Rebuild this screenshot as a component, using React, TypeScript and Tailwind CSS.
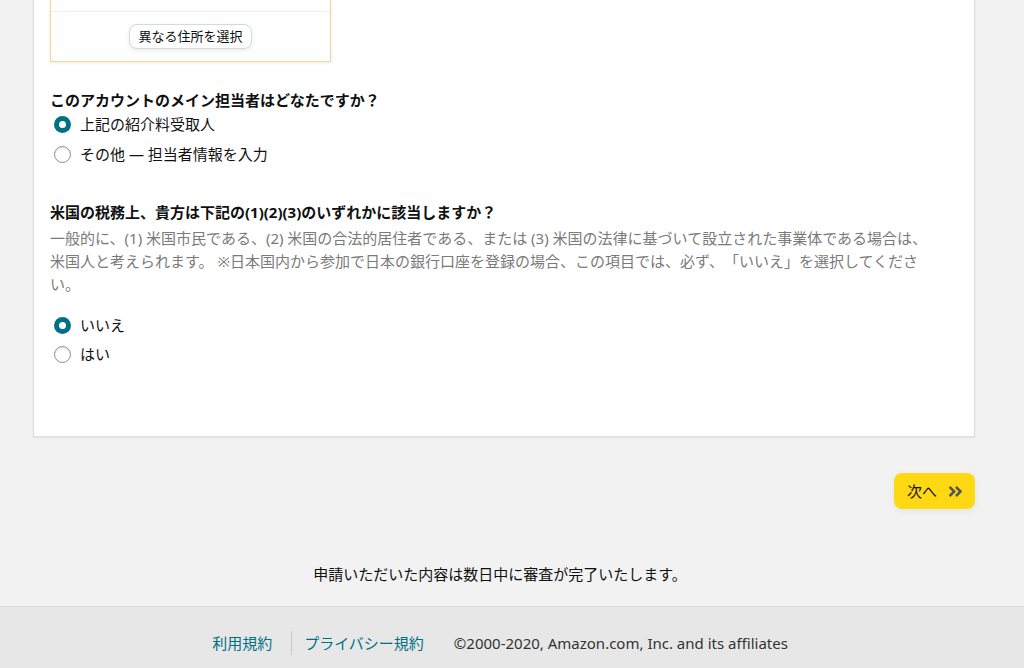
import type React from "react";
import { FaAngleDoubleRight } from "react-icons/fa";

type RadioProps = {
	label: string;
	checked?: boolean;
};

const Radio: React.FC<RadioProps> = ({ label, checked }) => (
	<label className="flex h-[26px] items-center">
		<span
			className={`ml-[4px] box-border flex h-[17px] w-[17px] items-center justify-center rounded-full ${
				checked
					? "bg-[#007185]"
					: "border border-[#8d9096] bg-white shadow-[inset_0_1px_2px_rgba(0,0,0,0.12)]"
			}`}
		>
			{checked && <span className="h-[7px] w-[7px] rounded-full bg-white" />}
		</span>
		<span className="ml-[9px] text-[15px] leading-[22px] text-[#0f1111]">
			{label}
		</span>
	</label>
);

const App: React.FC = () => {
	return (
		<div
			className="min-h-[668px] bg-[#f2f2f2] [text-spacing-trim:space-all]"
			style={{ fontFamily: '"Noto Sans", "Noto Sans CJK JP", sans-serif' }}
		>
			{/* main form card */}
			<div className="ml-[33px] w-[942px] border border-t-0 border-[#dddddd] bg-white px-[16px] pb-[69px] shadow-[0_1px_2px_rgba(0,0,0,0.06)]">
				<div className="w-[281px] border border-t-0 border-[#f8d596] shadow-[0_1px_3px_rgba(0,0,0,0.08)]">
					<div className="h-[12px] border-b border-[#eeeeee]" />
					<div className="flex justify-center pt-[12px] pb-[12px]">
						<button
							type="button"
							className="h-[25px] rounded-[8px] border border-[#d5d9d9] bg-white px-[8px] text-[13px] leading-[23px] text-[#0f1111] shadow-[0_2px_4px_rgba(213,217,217,0.5)]"
						>
							異なる住所を選択
						</button>
					</div>
				</div>

				<h3 className="mt-[27px] text-[15px] font-bold leading-[22px] text-[#0f1111]">
					このアカウントのメイン担当者はどなたですか？
				</h3>
				<div className="flex flex-col gap-[4px]">
					<Radio label="上記の紹介料受取人" checked />
					<Radio label="その他 — 担当者情報を入力" />
				</div>

				<h3 className="mt-[34px] text-[15px] font-bold leading-[22px] text-[#0f1111]">
					米国の税務上、貴方は下記の(1)(2)(3)のいずれかに該当しますか？
				</h3>
				<p className="mt-[4px] text-[15px] leading-[23px] text-[#7a7a7a]">
					一般的に、(1) 米国市民である、(2) 米国の合法的居住者である、または (3)
					米国の法律に基づいて設立された事業体である場合は、
					<br />
					米国人と考えられます。
					※日本国内から参加で日本の銀行口座を登録の場合、この項目では、必ず、「いいえ」を選択してくださ
					<br />
					い。
				</p>
				<div className="mt-[16px] flex flex-col gap-[3px]">
					<Radio label="いいえ" checked />
					<Radio label="はい" />
				</div>
			</div>

			{/* next button */}
			<div className="flex w-[975px] justify-end pt-[36px]">
				<button
					type="button"
					className="flex h-[36px] w-[81px] items-center rounded-[8px] bg-[#ffd814] pl-[13px] text-[15px] text-[#0f1111] shadow-[0_2px_5px_rgba(213,217,217,0.5)]"
				>
					次へ
					<FaAngleDoubleRight className="ml-[10px] text-[17px] text-[#555555]" />
				</button>
			</div>

			<p className="mt-[54px] w-[1000px] text-center text-[15px] leading-[22px] text-[#0f1111]">
				申請いただいた内容は数日中に審査が完了いたします。
			</p>

			{/* footer */}
			<footer className="mt-[21px] h-[70px] border-t border-[#dcdcdc] bg-[#e7e7e7] pt-[24px]">
				<div className="flex w-[1000px] items-center justify-center text-[15px] leading-[24px]">
					<a className="text-[#007185]" href="#">
						利用規約
					</a>
					<span className="ml-[19px] mr-[12px] h-[24px] w-px bg-[#c8c8c8]" />
					<a className="text-[#007185]" href="#">
						プライバシー規約
					</a>
					<span className="ml-[30px] text-[#333333]">
						©2000-2020, Amazon.com, Inc. and its affiliates
					</span>
				</div>
			</footer>
		</div>
	);
};

export default App;
